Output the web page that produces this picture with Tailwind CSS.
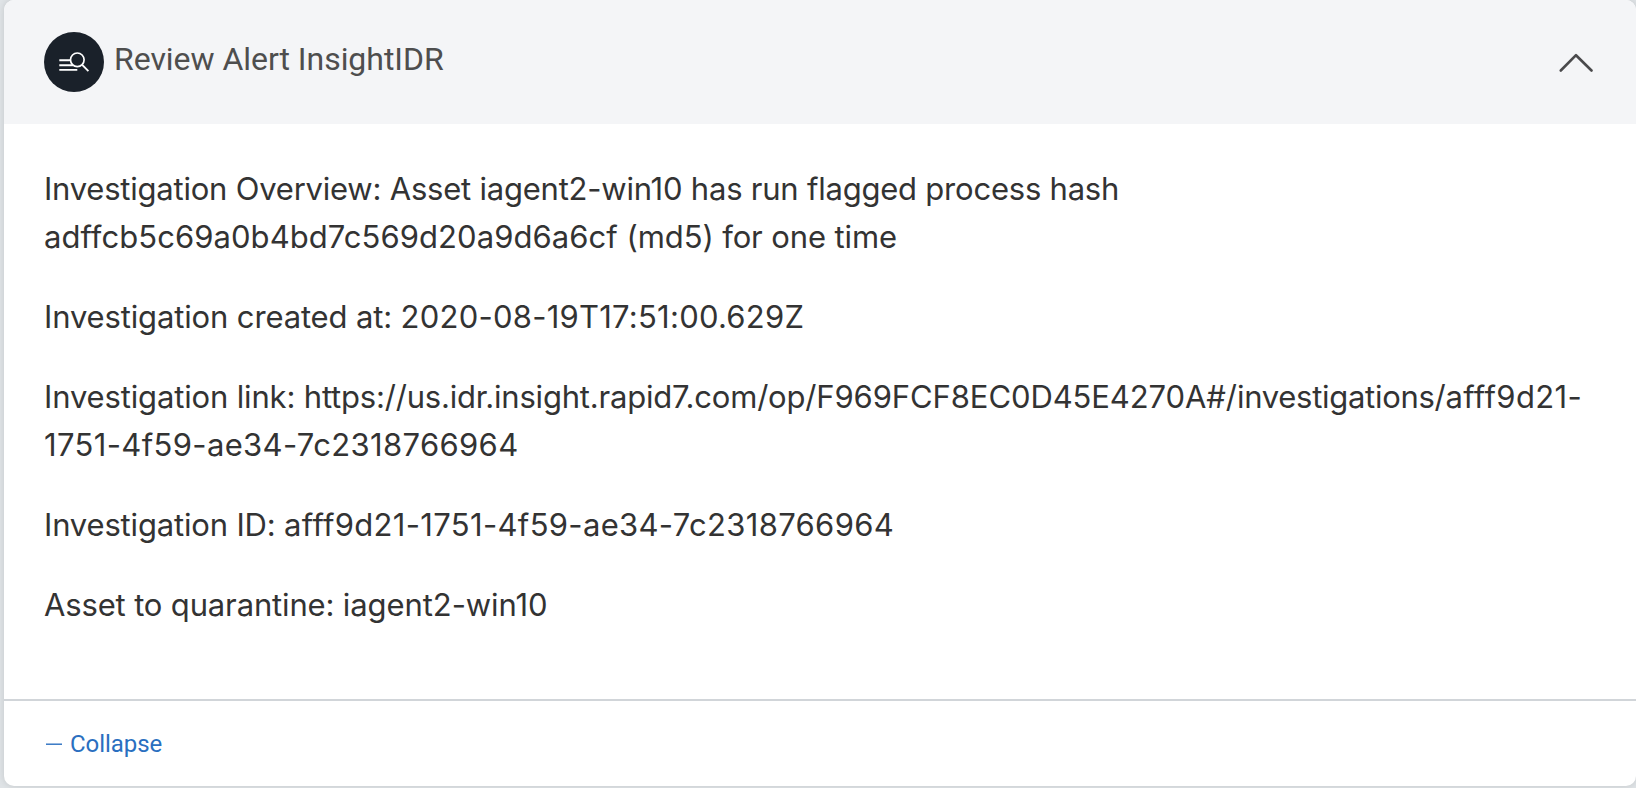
<!DOCTYPE html>
<html lang="en">
<head>
<meta charset="utf-8">
<title>Review Alert</title>
<script src="https://cdn.jsdelivr.net/npm/@tailwindcss/browser@4"></script>
</head>
<body class="h-[788px] overflow-hidden bg-[#dfe3e6] pl-1">
<main class="flex h-[786px] w-[1632px] flex-col overflow-hidden rounded-[10px] bg-white shadow-[0_0_6px_rgba(0,0,0,0.12)]">
  <header class="flex h-[124px] shrink-0 items-center bg-[#f4f5f7] pl-10 pr-[43px]">
    <svg class="size-[60px]" viewBox="0 0 60 60" fill="none" stroke="#fff">
      <circle cx="30" cy="30" r="30" fill="#1a212a" stroke="none"/>
      <path d="M15.300 28.300h12M15.300 33.300h14M15.300 37.900h18" stroke-width="1.9"/>
      <circle cx="33.300" cy="27.800" r="6.800" fill="#1a212a" stroke-width="1.7"/>
      <path d="M38.200 32.800l6.200 6.300" stroke-width="1.9"/>
    </svg>
    <h1 class="-mt-1.5 ml-2.5 whitespace-nowrap font-['Roboto',sans-serif] text-[32px] leading-[38px] tracking-[-0.04px] text-[#4e4e4e]">Review Alert InsightIDR</h1>
    <svg class="ml-auto h-[20px] w-[34px]" viewBox="0 0 34 20" fill="none" stroke="#4a4a4c" stroke-width="2.6" stroke-linecap="round" stroke-linejoin="round"><path d="M1.800 18.500L17 3.200l15.500 15.300"/></svg>
  </header>
  <section class="flex h-[575px] shrink-0 flex-col gap-8 pl-10 pt-[41px] whitespace-nowrap font-['Inter',sans-serif] text-[31px] leading-[48px] text-[#333]">
    <p><span class="tracking-[-0.22px]">Investigation Overview: Asset iagent2-win10 has run flagged process hash</span><br><span class="tracking-[0.06px]">adffcb5c69a0b4bd7c569d20a9d6a6cf </span><span class="tracking-[-0.12px]">(md5) for one time</span></p>
    <p><span class="tracking-[-0.14px]">Investigation created at: </span><span class="tracking-[0.24px]">2020-08-19T17:51:00.629Z</span></p>
    <p><span class="tracking-[-0.15px]">Investigation link: </span><span class="tracking-[-0.2px]">https://us.idr.insight.rapid7.com/op/</span><span class="tracking-[-0.1px]">F969FCF8EC0D45E4270A#/</span><span class="tracking-[-0.28px]">investigations/</span><span class="tracking-[0.35px]">afff9d21-</span><br><span class="tracking-[0.35px]">1751-4f59-ae34-7c2318766964</span></p>
    <p><span class="tracking-[-0.17px]">Investigation ID: </span><span class="tracking-[0.32px]">afff9d21-1751-4f59-ae34-7c2318766964</span></p>
    <p><span class="tracking-[-0.15px]">Asset to quarantine: </span><span class="tracking-[-0.08px]">iagent2-win10</span></p>
  </section>
  <footer class="flex flex-1 items-center border-t-2 border-[#d1d5d9] pl-[42px] text-[#2a6fc0]">
    <svg class="h-[3px] w-4" viewBox="0 0 16 3"><path d="M0 2.200h16" stroke="currentColor" stroke-width="1.400"/></svg>
    <span class="ml-2 font-['Roboto',sans-serif] text-[24px] leading-7 tracking-[-0.05px]">Collapse</span>
  </footer>
</main>
</body>
</html>
